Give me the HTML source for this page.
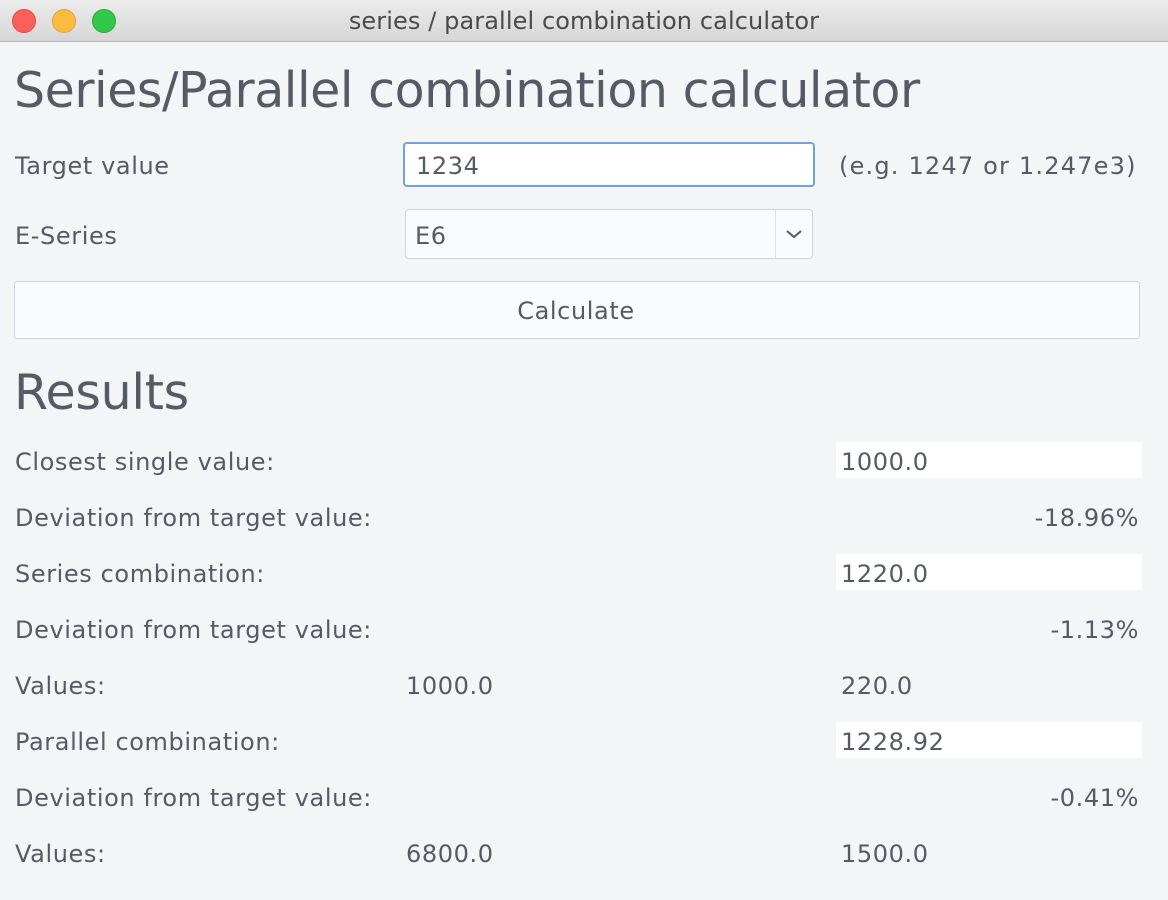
<!DOCTYPE html>
<html><head><style>
*{margin:0;padding:0;box-sizing:border-box}
body{width:1168px;height:900px;background:#f4f5f7;font-family:"DejaVu Sans","Liberation Sans",sans-serif;color:#555a66;position:relative;overflow:hidden}
.tb{position:absolute;left:0;top:0;width:1168px;height:42px;background:linear-gradient(#ececec,#d6d6d6);border-bottom:1px solid #b4b4b4}
.tb .t{position:absolute;left:0;right:0;top:7px;text-align:center;font-size:24px;color:#4a4a4a;letter-spacing:0.1px}
.dot{position:absolute;top:9px;width:24px;height:24px;border-radius:50%}
.a{position:absolute;white-space:nowrap;font-size:24px;line-height:28px;letter-spacing:0.6px}
.h{position:absolute;white-space:nowrap;font-size:49px;line-height:56px;letter-spacing:-0.45px}
.box{position:absolute;background:#fff}
</style></head><body>
<div class="tb"><div class="dot" style="left:12px;background:#fc605b;border:1px solid #de4a45"></div><div class="dot" style="left:52px;background:#fdbc40;border:1px solid #dea236"></div><div class="dot" style="left:92px;background:#34c84a;border:1px solid #27aa35"></div><div class="t">series / parallel combination calculator</div></div>
<div class="h" style="left:14px;top:63px">Series/Parallel combination calculator</div>
<div class="a" style="left:15px;top:152px">Target value</div>
<div class="box" style="left:403px;top:142px;width:412px;height:45px;border:2px solid #6fa3e0;border-radius:4px"></div>
<div class="a" style="left:416px;top:152px">1234</div>
<div class="a" style="left:839px;top:152px;letter-spacing:1.2px">(e.g. 1247 or 1.247e3)</div>
<div class="a" style="left:15px;top:222px">E-Series</div>
<div class="box" style="left:405px;top:209px;width:408px;height:50px;border:1px solid #cdd3e0;border-radius:4px;background:#fafbfc"></div>
<div style="position:absolute;left:775px;top:210px;width:1px;height:48px;background:#dde1e8"></div>
<svg style="position:absolute;left:785px;top:228px" width="18" height="12"><path d="M2 3 L9 9 L16 3" fill="none" stroke="#555a66" stroke-width="2"/></svg>
<div class="a" style="left:415px;top:222px">E6</div>
<div class="box" style="left:14px;top:281px;width:1126px;height:58px;border:1px solid #cdd3e0;border-radius:3px;background:#fafbfc"></div>
<div class="a" style="left:0;width:1152px;text-align:center;top:297px">Calculate</div>
<div class="h" style="left:14px;top:365px;letter-spacing:-0.3px">Results</div>
<div class="box" style="left:836px;top:442px;width:306px;height:36px"></div>
<div class="box" style="left:836px;top:554px;width:306px;height:36px"></div>
<div class="box" style="left:836px;top:722px;width:306px;height:36px"></div>
<div class="a" style="left:15px;top:448px">Closest single value:</div><div class="a" style="left:841px;top:448px">1000.0</div>
<div class="a" style="left:15px;top:504px">Deviation from target value:</div><div class="a" style="right:29px;top:504px">-18.96%</div>
<div class="a" style="left:15px;top:560px">Series combination:</div><div class="a" style="left:841px;top:560px">1220.0</div>
<div class="a" style="left:15px;top:616px">Deviation from target value:</div><div class="a" style="right:29px;top:616px">-1.13%</div>
<div class="a" style="left:15px;top:672px">Values:</div><div class="a" style="left:406px;top:672px">1000.0</div><div class="a" style="left:841px;top:672px">220.0</div>
<div class="a" style="left:15px;top:728px">Parallel combination:</div><div class="a" style="left:841px;top:728px">1228.92</div>
<div class="a" style="left:15px;top:784px">Deviation from target value:</div><div class="a" style="right:29px;top:784px">-0.41%</div>
<div class="a" style="left:15px;top:840px">Values:</div><div class="a" style="left:406px;top:840px">6800.0</div><div class="a" style="left:841px;top:840px">1500.0</div>
</body></html>
